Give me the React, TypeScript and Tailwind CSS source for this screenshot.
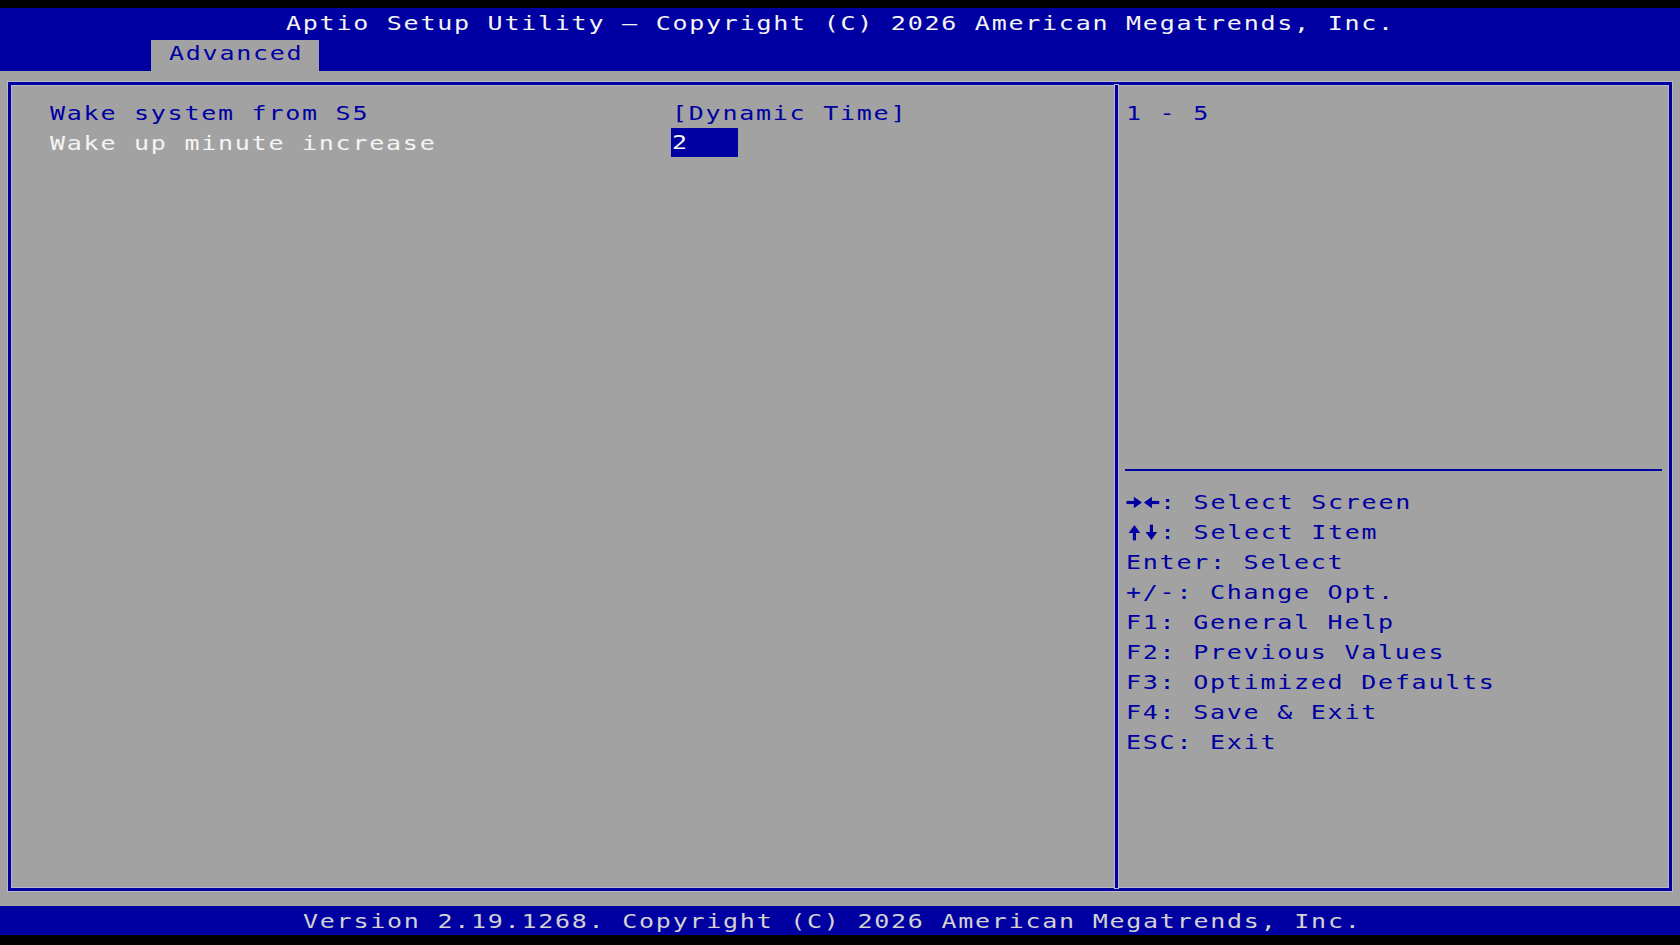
import React from 'react';

const BLUE = 'bg-[#0000a2]';

// BIOS glyphs are nearly square, so text is stretched horizontally from the left edge
function T({ children, className = '' }: { children: React.ReactNode; className?: string }) {
  return <span className={`inline-block origin-left scale-x-[1.25] ${className}`}>{children}</span>;
}

function Arrow({ dir }: { dir: 'left' | 'right' | 'up' | 'down' }) {
  const rot = { right: 0, down: 90, left: 180, up: 270 }[dir];
  return (
    <svg width="16.8" height="17" viewBox="0 0 16 16" className="inline-block">
      <g transform={`rotate(${rot} 8 8)`} fill="#0000a2">
        <rect x="0.5" y="6.5" width="9" height="3" />
        <path d="M7.5 2.5 L15.2 8 L7.5 13.5 Z" />
      </g>
    </svg>
  );
}

const helpKeys: { key: React.ReactNode; label: string }[] = [
  { key: <><Arrow dir="right" /><Arrow dir="left" /></>, label: ': Select Screen' },
  { key: <><Arrow dir="up" /><Arrow dir="down" /></>, label: ': Select Item' },
  { key: 'Enter', label: ': Select' },
  { key: '+/-', label: ': Change Opt.' },
  { key: 'F1', label: ': General Help' },
  { key: 'F2', label: ': Previous Values' },
  { key: 'F3', label: ': Optimized Defaults' },
  { key: 'F4', label: ': Save & Exit' },
  { key: 'ESC', label: ': Exit' },
];

export default function App() {
  return (
    <div className="w-[1680px] h-[945px] bg-black flex flex-col overflow-hidden font-['DejaVu_Sans_Mono','Liberation_Mono',monospace] text-[20px] tracking-[1.4px] whitespace-pre">
      {/* top black strip */}
      <div className="h-[8px] shrink-0" />

      {/* header */}
      <header className={`h-[63px] shrink-0 ${BLUE} flex flex-col`}>
        <div className="h-[32px] pt-[1px] leading-[29px] pl-[286px] text-[#f4f4f4]">
          <T>Aptio Setup Utility – Copyright (C) 2026 American Megatrends, Inc.</T>
        </div>
        <div className="pl-[151px]">
          <div className="w-[168px] h-[31px] bg-[#a2a2a2] pt-[1px] pl-[18px] leading-[25px] text-[#0000a2]">
            <T>Advanced</T>
          </div>
        </div>
      </header>

      {/* main area */}
      <main className="h-[835px] shrink-0 bg-[#a2a2a2] px-[8px] pt-[11px]">
        <div className="h-[809px] border-[3px] border-[#0000a2] shadow-[0_0_0_1px_#b8b8c8,inset_0_0_0_1px_#b8b8c8] flex">
          {/* left column */}
          <div className="w-[1104px] pt-[13px] pl-[39px]">
            <div className="grid grid-cols-[622px_1fr] auto-rows-[30px] leading-[30px]">
              <div className="text-[#0000a2]"><T>Wake system from S5</T></div>
              <div className="text-[#0000a2]"><T>[Dynamic Time]</T></div>
              <div className="text-[#f4f4f4]"><T>Wake up minute increase</T></div>
              <div className="-mt-[1px]">
                <span className={`inline-block w-[67px] h-[29px] leading-[29px] ${BLUE} text-[#f4f4f4] -ml-[1px] pl-[1px]`}>
                  <T>2</T>
                </span>
              </div>
            </div>
          </div>

          {/* divider */}
          <div className="w-[3px] bg-[#0000a2] shadow-[0_0_0_1px_#b8b8c8]" />

          {/* right column */}
          <div className="flex-1 flex flex-col">
            <div className="h-[384px] pt-[13px] pl-[8px] leading-[30px] text-[#0000a2]">
              <T>1 - 5</T>
            </div>
            <div className="mx-[7px] h-[2px] bg-[#0000a2]" />
            <div className="pt-[16px] pl-[8px] flex flex-col text-[#0000a2]">
              {helpKeys.map((k) => (
                <div key={k.label} className="h-[30px] leading-[30px] flex items-center">
                  {typeof k.key === 'string' ? <T>{k.key + k.label}</T> : <>{k.key}<T>{k.label}</T></>}
                </div>
              ))}
            </div>
          </div>
        </div>
      </main>

      {/* footer */}
      <footer className={`h-[29px] shrink-0 ${BLUE} pt-[1px] leading-[29px] pl-[303px] text-[#d2d2d2]`}>
        <T>Version 2.19.1268. Copyright (C) 2026 American Megatrends, Inc.</T>
      </footer>
      <div className="h-[10px] shrink-0" />
    </div>
  );
}
